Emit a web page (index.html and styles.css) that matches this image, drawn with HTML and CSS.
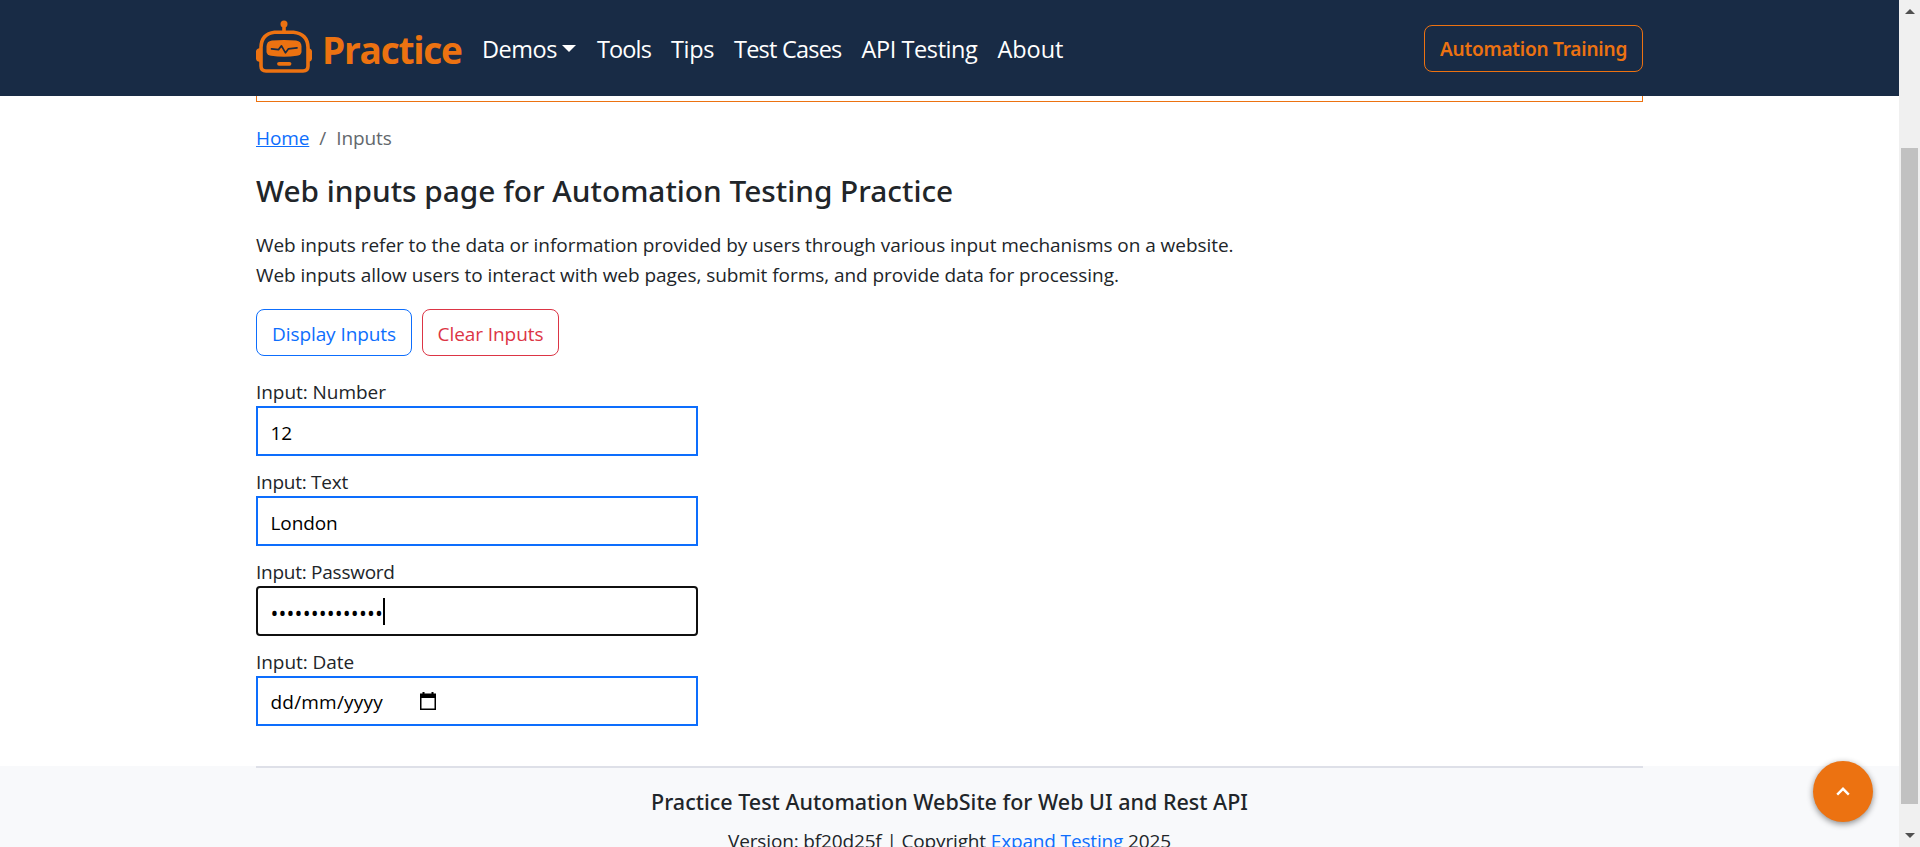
FILE: index.html
```html
<!DOCTYPE html>
<html lang="en">
<head>
<meta charset="utf-8">
<title>Web inputs page for Automation Testing Practice</title>
<link rel="stylesheet" href="styles.css">
</head>
<body>
<div class="window">
  <div class="page">
    <header class="navbar">
      <div class="container navbar-inner">
        <a class="brand">
          <svg class="brand-logo" viewBox="0 0 56 54" width="56" height="54">
            <circle cx="28" cy="4" r="3.5" fill="#ec7211"/>
            <path d="M28 6v6" stroke="#ec7211" stroke-width="3.600"/>
            <path d="M18.500 12.200h19q14 1.500 14.500 15V46q0 5-5 5H10q-5 0-5-5V27.200q.5-13.500 13.500-15z" fill="none" stroke="#ec7211" stroke-width="3.600"/>
            <path d="M4 28Q0 28.500 0 31.500v7Q0 41.500 4 42zM52 28q4 .5 4 3.500v7q0 3-4 3.500z" fill="#ec7211"/>
            <path d="M16 20.500q12-1.200 24 0q5.500 .7 5.500 6v5q0 3.500-4.500 4.300q-13 2-26 0q-4.500-.8-4.500-4.300v-5q0-5.300 5.500-6z" fill="#ec7211"/>
            <path d="M15.500 28.800l7 .8l3-3.800l4 7l3-4l8.500-1" fill="none" stroke="#182b45" stroke-width="1.700" stroke-linecap="round" stroke-linejoin="round"/>
            <path d="M23 43.800h10.500" stroke="#ec7211" stroke-width="3.800" stroke-linecap="round"/>
          </svg>
          <span class="brand-name">Practice</span>
        </a>
        <nav class="menu">
          <a class="menu-item demos">Demos<i class="caret"></i></a>
          <a class="menu-item tools">Tools</a>
          <a class="menu-item tips">Tips</a>
          <a class="menu-item cases">Test Cases</a>
          <a class="menu-item api">API Testing</a>
          <a class="menu-item">About</a>
        </nav>
        <a class="btn btn-training">Automation Training</a>
      </div>
    </header>
    <main class="container content">
      <div class="banner"></div>
      <nav class="breadcrumb">
        <a class="link">Home</a><span class="sep">/</span><span>Inputs</span>
      </nav>
      <h1 class="title">Web inputs page for Automation Testing Practice</h1>
      <p class="intro">Web inputs refer to the data or information provided by users through various input mechanisms on a website.<br>Web inputs allow users to interact with web pages, submit forms, and provide data for processing.</p>
      <div class="actions">
        <button class="btn btn-display">Display Inputs</button>
        <button class="btn btn-clear">Clear Inputs</button>
      </div>
      <form class="fields">
        <div class="field"><label>Input: Number</label><input class="control" value="12"></div>
        <div class="field"><label class="tight">Input: Text</label><input class="control" value="London"></div>
        <div class="field"><label class="tight">Input: Password</label><div class="control control-focus"><span class="dots">••••••••••••••</span><i class="cursor"></i></div></div>
        <div class="field"><label>Input: Date</label><div class="control control-date"><span class="date">dd/mm/yyyy</span>
          <svg class="calendar" viewBox="0 0 16 18" width="16" height="18"><path d="M2.500 0h2v1.500h7V0h2v1.500H16V18H0V1.500h2.500zM1.500 6v10.500h13V6z" fill="#000" fill-rule="evenodd"/></svg></div></div>
      </form>
    </main>
    <footer class="footer">
      <div class="container footer-inner">
        <h2 class="footer-title">Practice Test Automation WebSite for Web UI and Rest API</h2>
        <p class="footer-text">Version: bf20d25f | Copyright <a class="footer-link">Expand Testing</a> 2025</p>
      </div>
    </footer>
    <button class="to-top"><svg viewBox="0 0 14 9" width="14" height="9"><path d="M1.200 7.600L7 1.800l5.800 5.800" fill="none" stroke="#fff" stroke-width="2.400"/></svg></button>
  </div>
  <div class="scrollbar">
    <i class="arrow arrow-up"></i>
    <div class="thumb"></div>
    <i class="arrow arrow-down"></i>
  </div>
</div>
</body>
</html>
```
FILE: styles.css
```css
* { box-sizing: border-box; }
body {
  margin: 0;
  font-family: "Segoe UI", "Open Sans", sans-serif;
  font-size: 19px;
  line-height: 30px;
  letter-spacing: -.05px;
  color: #212529;
  background: #fff;
}
.window { display: flex; height: 847px; overflow: hidden; }
.page { position: relative; flex: 1; display: flex; flex-direction: column; overflow: hidden; }
.container { width: 1387px; margin: 0 auto; }

.navbar { height: 96px; background: #182b45; flex: none; }
.navbar-inner { display: flex; align-items: center; height: 96px; }
.brand { display: flex; align-items: center; gap: 10px; color: #ec7211; }
.brand-logo { display: block; margin-bottom: 3px; }
.brand-name { width: 140px; font-size: 37px; font-weight: 700; line-height: 50px; letter-spacing: -1.25px; padding-top: 3px; }
.menu { display: flex; gap: 20px; margin-left: 20px; padding-top: 2px; color: #fff; font-size: 23.500px; line-height: 36px; }
.menu-item { display: flex; align-items: center; }
.demos { letter-spacing: -.47px; }
.tools { letter-spacing: -.87px; }
.tips { letter-spacing: -.36px; }
.cases { letter-spacing: -.78px; }
.api { letter-spacing: -.41px; }
.caret { border: 7px solid transparent; border-top-color: #fff; border-bottom: 0; margin: 0 1px 2px 5px; }
.btn { display: flex; align-items: center; justify-content: center; height: 47px; border: 1px solid; border-radius: 8px; background: none; font: inherit; letter-spacing: -.08px; padding: 2px 0 0; }
.btn-training { width: 219px; margin-left: auto; color: #ec7211; font-family: "Segoe UI", "Noto Sans", sans-serif; font-weight: 600; letter-spacing: -.22px; }

.content { height: 670px; flex: none; display: flex; flex-direction: column; }
.banner { height: 6px; flex: none; border: 1px solid #ec7211; border-top: 0; }
.breadcrumb { display: flex; margin-top: 21px; color: #63686d; letter-spacing: -.1px; }
.link { color: #0d6efd; text-decoration: underline; }
.sep { padding: 0 10px; }
.title { margin: 19px 0 0; font-family: "Segoe UI", "Noto Sans", sans-serif; font-size: 29.800px; font-weight: 500; line-height: 38px; letter-spacing: 0; }
.intro { margin: 20px 0 0; }
.actions { display: flex; gap: 10px; margin-top: 19px; }
.btn-display { width: 156px; color: #0d6efd; }
.btn-clear { width: 137px; color: #dc3545; }
.fields { display: flex; flex-direction: column; gap: 10px; margin-top: 20px; }
.field { display: flex; flex-direction: column; }
.field label { height: 30px; padding-top: 1px; }
.tight { letter-spacing: -.26px; }
.control { display: flex; align-items: center; width: 442px; height: 50px; border: 2px solid #0d6efd; padding: 3px 13px 0 12.500px; background: #fff; color: #000; font: inherit; letter-spacing: -.1px; outline: 0; }
.control-focus { border-color: #101010; border-radius: 4px; }
.dots { width: 112.500px; font-size: 21px; letter-spacing: .14px; white-space: nowrap; }
.cursor { width: 2px; height: 27px; background: #000; margin-bottom: 3px; }
.control-date { padding-top: 2px; }
.date { letter-spacing: .2px; }
.calendar { margin-left: 37px; margin-bottom: 3px; }

.footer { flex: 1; background: #f8f9fb; }
.footer-inner { border-top: 2px solid #dee0e8; text-align: center; }
.footer-title { margin: 19px 0 0; font-family: "Segoe UI", "Noto Sans", sans-serif; font-size: 21.500px; font-weight: 500; line-height: 30px; letter-spacing: 0; }
.footer-text { margin: 9px 0 0; letter-spacing: -.15px; }
.footer-link { color: #0d6efd; }

.to-top { position: absolute; right: 26px; bottom: 25px; width: 60px; height: 61px; border: 0; border-radius: 50%; background: #ec7211; display: flex; align-items: center; justify-content: center; box-shadow: 0 2px 6px rgba(0,0,0,.45); }
.scrollbar { width: 21px; background: #f0f0f0; display: flex; flex-direction: column; align-items: center; }
.thumb { width: 17px; height: 656px; background: #c1c1c1; }
.arrow { border: 5px solid transparent; }
.arrow-up { border-bottom-color: #505050; border-top: 0; margin: 9px 0 134px; }
.arrow-down { border-top-color: #505050; border-bottom: 0; margin-top: 29px; }
```
